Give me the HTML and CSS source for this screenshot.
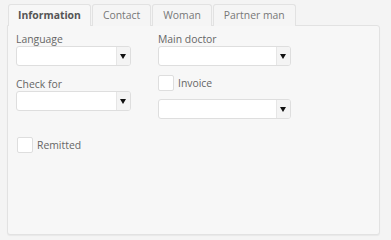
FILE: index.html
```html
<!DOCTYPE html>
<html lang="en">
<head>
    <meta charset="UTF-8">
    <title>Patient form</title>
    <link rel="stylesheet" href="styles.css">
</head>
<body>
    <div class="tabs">
        <div class="tab active">Information</div>
        <div class="tab">Contact</div>
        <div class="tab">Woman</div>
        <div class="tab">Partner man</div>
    </div>

    <div class="panel">
        <div class="column col-left">
            <label class="field-label">Language</label>
            <div class="select"><span class="select-value"></span><span class="select-arrow"></span></div>

            <label class="field-label spaced">Check for</label>
            <div class="select"><span class="select-value"></span><span class="select-arrow"></span></div>

            <div class="check-row remitted">
                <span class="checkbox"></span>
                <span class="check-label">Remitted</span>
            </div>
        </div>

        <div class="column col-right">
            <label class="field-label">Main doctor</label>
            <div class="select"><span class="select-value"></span><span class="select-arrow"></span></div>

            <div class="check-row invoice">
                <span class="checkbox"></span>
                <span class="check-label">Invoice</span>
            </div>
            <div class="select"><span class="select-value"></span><span class="select-arrow"></span></div>
        </div>
    </div>
</body>
</html>
```

FILE: styles.css
```css
* {
    margin: 0;
    padding: 0;
    box-sizing: border-box;
}

body {
    font-family: 'Open Sans', 'Liberation Sans', sans-serif;
    font-size: 10.4px;
    color: #666;
    background: #f4f4f4;
    padding: 4px 11px 5px 7px;
    width: 391px;
    height: 240px;
}

.tabs {
    display: flex;
    padding-left: 1px;
}

.tab {
    height: 22px;
    line-height: 20px;
    padding: 0 10px;
    margin-right: 1px;
    border: 1px solid #e2e2e2;
    border-bottom: none;
    border-radius: 3px 3px 0 0;
    background: #f5f5f5;
    color: #777;
    margin-bottom: -1px;
    position: relative;
}

.tab.active {
    font-weight: bold;
    color: #555;
    background: #f7f7f7;
    padding: 0 9px;
    z-index: 1;
}

.panel {
    height: 210px;
    border: 1px solid #e2e2e2;
    border-radius: 0 3px 3px 3px;
    background: #f7f7f7;
    box-shadow: 0 1px 1px rgba(0, 0, 0, 0.05);
    padding: 6px 8px;
    display: flex;
    gap: 27px;
}

.column {
    display: flex;
    flex-direction: column;
}

.col-left {
    width: 115px;
}

.col-right {
    width: 133px;
}

.field-label {
    display: block;
    height: 14px;
    line-height: 14px;
    color: #666;
}

.field-label.spaced {
    margin-top: 11px;
}

.select {
    display: flex;
    height: 20px;
    background: #fff;
    border: 1px solid #dedede;
    border-radius: 3px;
}

.select-value {
    flex: 1;
}

.select-arrow {
    width: 14px;
    border-left: 1px solid #e6e6e6;
    background: #f4f4f4;
    position: relative;
    border-radius: 0 2px 2px 0;
}

.select-arrow::after {
    content: "";
    position: absolute;
    left: 3px;
    top: 7px;
    border-left: 3px solid transparent;
    border-right: 3px solid transparent;
    border-top: 5px solid #111;
}

.check-row {
    display: flex;
    align-items: center;
    gap: 4px;
    height: 16px;
}

.checkbox {
    width: 16px;
    height: 16px;
    background: #fff;
    border: 1px solid #dedede;
    border-radius: 2px;
}

.check-label {
    color: #666;
}

.check-row.invoice {
    margin-top: 9px;
    margin-bottom: 8px;
}

.check-row.remitted {
    margin-top: 26px;
    margin-left: 1px;
}
```
